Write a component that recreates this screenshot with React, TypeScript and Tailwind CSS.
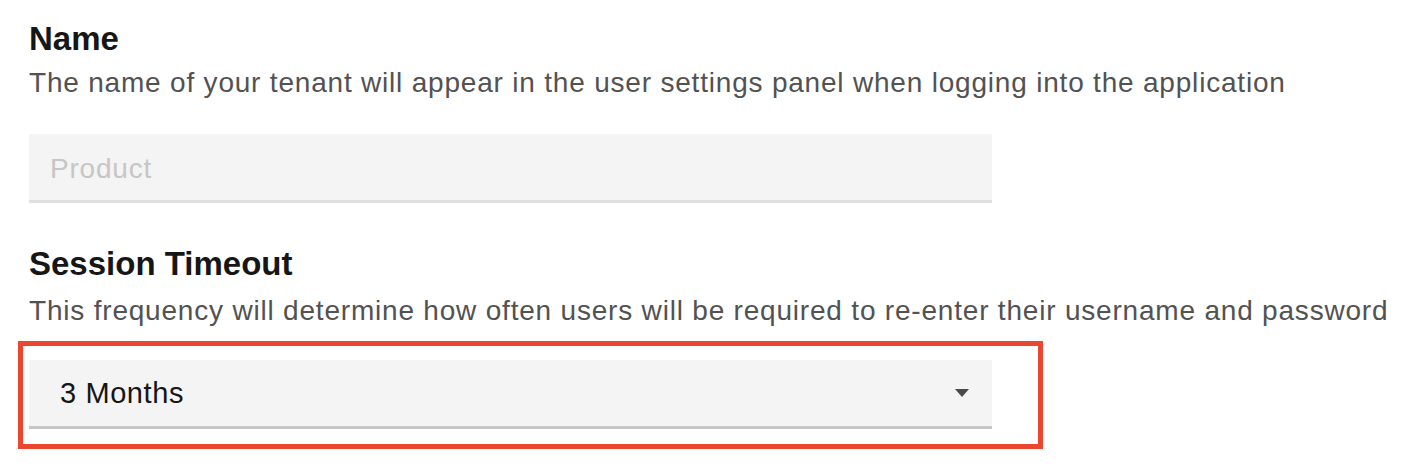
const Field = ({ title, desc, gap }: { title: string; desc: string; gap: string }) => (
  <div>
    <h2 className="text-[33px] leading-[40px] font-bold text-[#161616]">{title}</h2>
    <p className={`${gap} text-[28px] leading-[34px] tracking-[0.8px] text-[#525252]`}>{desc}</p>
  </div>
);

const App = () => {
  return (
    <div className="w-[1424px] h-[472px] bg-white font-['Liberation_Sans',Arial,sans-serif] pl-[29px] pt-[19px]">
      <Field
        title="Name"
        gap="mt-[7px]"
        desc="The name of your tenant will appear in the user settings panel when logging into the application"
      />
      <div className="mt-[34px] w-[963px] h-[69px] bg-[#f4f4f4] border-b-[3px] border-[#e0e0e0] flex items-center pl-[21px] pt-[3px]">
        <span className="text-[28px] tracking-[0.8px] text-[#c6c6c6]">Product</span>
      </div>

      <div className="mt-[41px]">
        <Field
          title="Session Timeout"
          gap="mt-[10px]"
          desc="This frequency will determine how often users will be required to re-enter their username and password"
        />
      </div>

      {/* highlighted select */}
      <div className="mt-[13px] -ml-[11px] w-[1025px] border-[5px] border-[#ea4630] pl-[6px] pt-[14px] pb-[15px]">
        <div className="w-[963px] h-[69px] bg-[#f4f4f4] border-b-[3px] border-[#c6c6c6] flex items-center justify-between pl-[31px] pr-[23px] pt-[2px]">
          <span className="text-[29px] tracking-[0.6px] text-[#161616]">3 Months</span>
          <svg width="14" height="8" viewBox="0 0 14 8" className="mt-[-2px]">
            <path d="M0 0h14L7 8z" fill="#4a4a4a" />
          </svg>
        </div>
      </div>
    </div>
  );
};

export default App;
